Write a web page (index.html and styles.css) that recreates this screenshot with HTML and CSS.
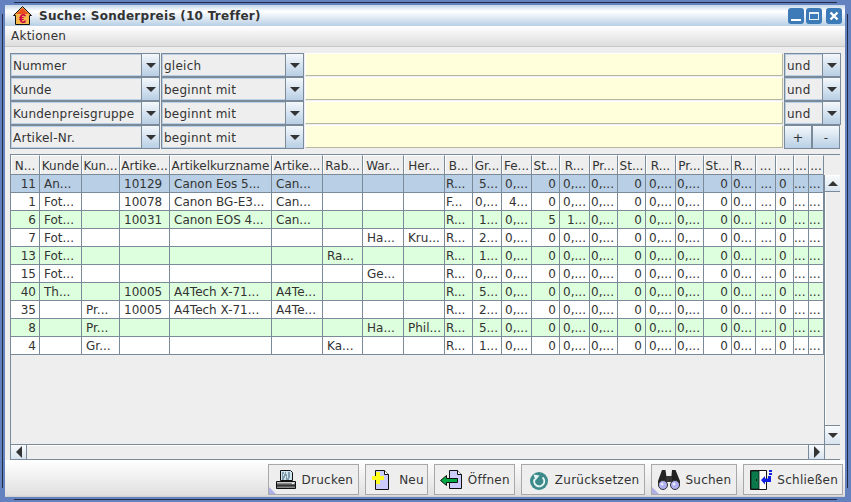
FILE: index.html
```html
<!DOCTYPE html>
<html lang="de">
<head>
<meta charset="utf-8">
<title>Suche: Sonderpreis</title>
<link rel="stylesheet" href="styles.css">
</head>
<body>
<div class="window">
  <div class="inner">
    <header class="titlebar">
      <svg class="appicon" width="20" height="20" viewBox="0 0 20 20"><path d="M9.5 .5 L18.5 9.5 L16.5 9.5 L16.5 18.5 L2.5 18.5 L2.5 9.5 L.5 9.5 Z" fill="#f2a23c" stroke="#111"/><path d="M9.5 2 L15.5 8 L3.5 8 Z" fill="#e8501e"/><rect x="3" y="8" width="13" height="10" fill="#f8b84c"/><text x="9.5" y="17" class="euro">€</text></svg>
      <span class="titletext">Suche: Sonderpreis (10 Treffer)</span>
      <span class="winbtns">
        <span class="winbtn"><svg width="16" height="16" viewBox="0 0 16 16"><rect x="3" y="11" width="10" height="2" fill="#fff"/></svg></span>
        <span class="winbtn"><svg width="16" height="16" viewBox="0 0 16 16"><path d="M3 4h10v8H3z M4 6v5h8V6z" fill="#e8f0f8" fill-rule="evenodd"/></svg></span>
        <span class="winbtn"><svg width="16" height="16" viewBox="0 0 16 16"><path d="M4.5 4.5 L11.500 11.500 M11.500 4.500 L4.500 11.500" stroke="#fff" stroke-width="2.400"/></svg></span>
      </span>
    </header>
    <nav class="menubar"><span>Aktionen</span></nav>
    <main class="content">
      <section class="filters">
        <div class="combo"><span class="val">Nummer</span><span class="arrow"><i></i></span></div>
        <div class="combo"><span class="val">gleich</span><span class="arrow"><i></i></span></div>
        <div class="field"></div>
        <div class="combo"><span class="val">und</span><span class="arrow"><i></i></span></div>
        <div class="combo"><span class="val">Kunde</span><span class="arrow"><i></i></span></div>
        <div class="combo"><span class="val">beginnt mit</span><span class="arrow"><i></i></span></div>
        <div class="field"></div>
        <div class="combo"><span class="val">und</span><span class="arrow"><i></i></span></div>
        <div class="combo"><span class="val">Kundenpreisgruppe</span><span class="arrow"><i></i></span></div>
        <div class="combo"><span class="val">beginnt mit</span><span class="arrow"><i></i></span></div>
        <div class="field"></div>
        <div class="combo"><span class="val">und</span><span class="arrow"><i></i></span></div>
        <div class="combo"><span class="val">Artikel-Nr.</span><span class="arrow"><i></i></span></div>
        <div class="combo"><span class="val">beginnt mit</span><span class="arrow"><i></i></span></div>
        <div class="field"></div>
        <div class="plusminus"><span>+</span><span>-</span></div>
      </section>
      <section class="tablebox">
        <div class="viewport">
          <table>
            <colgroup><col><col><col><col><col><col><col><col><col><col><col><col><col><col><col><col><col><col><col><col><col><col><col><col></colgroup>
            <thead><tr><th>N...</th><th>Kunde</th><th>Kun...</th><th>Artike...</th><th>Artikelkurzname</th><th>Artike...</th><th>Rab...</th><th>War...</th><th>Her...</th><th>B...</th><th>Gr...</th><th>Fe...</th><th>St...</th><th>R...</th><th>Pr...</th><th>St...</th><th>R...</th><th>Pr...</th><th>St...</th><th>R...</th><th>...</th><th>...</th><th>...</th><th>...</th></tr></thead>
            <tbody>
              <tr class="sel"><td>11</td><td>An...</td><td></td><td>10129</td><td>Canon Eos 5...</td><td>Can...</td><td></td><td></td><td></td><td>R...</td><td>5...</td><td>0,...</td><td>0</td><td>0,...</td><td>0,...</td><td>0</td><td>0,...</td><td>0,...</td><td>0</td><td>0...</td><td>...</td><td>0</td><td>...</td><td>...</td></tr>
              <tr><td>1</td><td>Fot...</td><td></td><td>10078</td><td>Canon BG-E3...</td><td>Can...</td><td></td><td></td><td></td><td>F...</td><td>0,...</td><td>4...</td><td>0</td><td>0,...</td><td>0,...</td><td>0</td><td>0,...</td><td>0,...</td><td>0</td><td>0...</td><td>...</td><td>0</td><td>...</td><td>...</td></tr>
              <tr class="alt"><td>6</td><td>Fot...</td><td></td><td>10031</td><td>Canon EOS 4...</td><td>Can...</td><td></td><td></td><td></td><td>R...</td><td>1...</td><td>0,...</td><td>5</td><td>1...</td><td>0,...</td><td>0</td><td>0,...</td><td>0,...</td><td>0</td><td>0...</td><td>...</td><td>0</td><td>...</td><td>...</td></tr>
              <tr><td>7</td><td>Fot...</td><td></td><td></td><td></td><td></td><td></td><td>Ha...</td><td>Kru...</td><td>R...</td><td>2...</td><td>0,...</td><td>0</td><td>0,...</td><td>0,...</td><td>0</td><td>0,...</td><td>0,...</td><td>0</td><td>0...</td><td>...</td><td>0</td><td>...</td><td>...</td></tr>
              <tr class="alt"><td>13</td><td>Fot...</td><td></td><td></td><td></td><td></td><td>Ra...</td><td></td><td></td><td>R...</td><td>1...</td><td>0,...</td><td>0</td><td>0,...</td><td>0,...</td><td>0</td><td>0,...</td><td>0,...</td><td>0</td><td>0...</td><td>...</td><td>0</td><td>...</td><td>...</td></tr>
              <tr><td>15</td><td>Fot...</td><td></td><td></td><td></td><td></td><td></td><td>Ge...</td><td></td><td>R...</td><td>0,...</td><td>0,...</td><td>0</td><td>0,...</td><td>0,...</td><td>0</td><td>0,...</td><td>0,...</td><td>0</td><td>0...</td><td>...</td><td>0</td><td>...</td><td>...</td></tr>
              <tr class="alt"><td>40</td><td>Th...</td><td></td><td>10005</td><td>A4Tech X-71...</td><td>A4Te...</td><td></td><td></td><td></td><td>R...</td><td>5...</td><td>0,...</td><td>0</td><td>0,...</td><td>0,...</td><td>0</td><td>0,...</td><td>0,...</td><td>0</td><td>0...</td><td>...</td><td>0</td><td>...</td><td>...</td></tr>
              <tr><td>35</td><td></td><td>Pr...</td><td>10005</td><td>A4Tech X-71...</td><td>A4Te...</td><td></td><td></td><td></td><td>R...</td><td>2...</td><td>0,...</td><td>0</td><td>0,...</td><td>0,...</td><td>0</td><td>0,...</td><td>0,...</td><td>0</td><td>0...</td><td>...</td><td>0</td><td>...</td><td>...</td></tr>
              <tr class="alt"><td>8</td><td></td><td>Pr...</td><td></td><td></td><td></td><td></td><td>Ha...</td><td>Phil...</td><td>R...</td><td>5...</td><td>0,...</td><td>0</td><td>0,...</td><td>0,...</td><td>0</td><td>0,...</td><td>0,...</td><td>0</td><td>0...</td><td>...</td><td>0</td><td>...</td><td>...</td></tr>
              <tr><td>4</td><td></td><td>Gr...</td><td></td><td></td><td></td><td>Ka...</td><td></td><td></td><td>R...</td><td>1...</td><td>0,...</td><td>0</td><td>0,...</td><td>0,...</td><td>0</td><td>0,...</td><td>0,...</td><td>0</td><td>0...</td><td>...</td><td>0</td><td>...</td><td>...</td></tr>
            </tbody>
          </table>
        </div>
        <div class="vbar">
          <div class="corner"></div>
          <div class="sbtn up"><i></i></div>
          <div class="track"></div>
          <div class="sbtn down"><i></i></div>
        </div>
        <div class="hbar">
          <div class="sbtn left"><i></i></div>
          <div class="track"></div>
          <div class="sbtn right"><i></i></div>
        </div>
        <div class="endcorner"></div>
      </section>
    </main>
    <footer class="buttons">
      <button class="btn mark medium">
        <svg width="24" height="24" viewBox="0 0 24 24"><path d="M7.500 2.500h10l2 2v8h-12z" fill="#cfe6f0" stroke="#111"/><path d="M9 5h2M12 5h1M15 5h2M9 7h1M11 7h3M15 7h2M9 9h3M13 9h1M15 9h2M9 11h2M13 11h3" stroke="#356" stroke-width="1"/><path d="M3.500 13.500h19v7h-19z" fill="#8a8a8a" stroke="#111"/><path d="M4 14h18v1H4z" fill="#ccc"/><path d="M4 17.500h18" stroke="#333" stroke-width="2"/><rect x="19" y="15" width="2" height="1" fill="#fff"/></svg>
        Drucken
      </button>
      <button class="btn narrow">
        <svg width="24" height="24" viewBox="0 0 24 24"><path d="M5.500 2.500h9l4 4v15h-13z" fill="#ccccff" stroke="#111"/><path d="M14.500 2.500v4h4" fill="#fff" stroke="#111"/><path d="M6 4h4v4h4v4h-4v4H6v-4H2V8h4z" fill="#ffff22"/></svg>
        Neu
      </button>
      <button class="btn">
        <svg width="24" height="24" viewBox="0 0 24 24"><path d="M10.500 2.500h8l4 4v14h-12z" fill="#ccccff" stroke="#111"/><path d="M18.500 2.500v4h4" fill="#fff" stroke="#111"/><path d="M1.500 12.500 L7.500 7.500 V10.500 H18.500 V14.500 H7.500 V17.500 Z" fill="#00aa44" stroke="#111"/></svg>
        Öffnen
      </button>
      <button class="btn medium">
        <svg width="24" height="24" viewBox="0 0 24 24"><circle cx="13" cy="13" r="9" fill="#3d8a8a"/><path d="M8.800 11 A5 5 0 1 0 16.500 9.500" fill="none" stroke="#e8f4f4" stroke-width="2"/><path d="M7.500 6.500 L13.500 7.500 L9.500 12.500 Z" fill="#e8f4f4"/></svg>
        Zurücksetzen
      </button>
      <button class="btn mark medium">
        <svg width="24" height="24" viewBox="0 0 24 24"><path d="M6 2h3.500l1.500 11v5H2v-5z" fill="#222"/><path d="M16 2h3.500L24 13v5h-9v-5z" fill="#222"/><rect x="10" y="8" width="6" height="6" fill="#333"/><circle cx="7" cy="17" r="4.500" fill="#b0b0f0" stroke="#333"/><circle cx="19" cy="17" r="4.500" fill="#b0b0f0" stroke="#333"/><circle cx="6" cy="16" r="1.500" fill="#e8e8ff"/><circle cx="18" cy="16" r="1.500" fill="#e8e8ff"/></svg>
        Suchen
      </button>
      <button class="btn">
        <svg width="24" height="24" viewBox="0 0 24 24"><path d="M2.500 2.500h16v19h-16z" fill="#fff" stroke="#111"/><path d="M3 3h8v18H3z" fill="#0a7a4a" stroke="#111" stroke-width=".8"/><rect x="8" y="11" width="1" height="2" fill="#111"/><path d="M13 12 L17 8 V10.500 H20 V8 H23 V14 H17 V16.500 Z" fill="#1020e0"/><path d="M21 2h3v2h-3zM21 5h3v2h-3z" fill="#1020e0"/></svg>
        Schließen
      </button>
    </footer>
  </div>
</div>
</body>
</html>
```

FILE: styles.css
```css
* { box-sizing: border-box; }
html, body { margin: 0; padding: 0; }
body {
  width: 851px;
  height: 502px;
  overflow: hidden;
  font-family: "DejaVu Sans", sans-serif;
  font-size: 12px;
  letter-spacing: .25px;
  color: #333;
}
.window {
  position: relative;
  width: 851px;
  height: 502px;
  padding: 5px 6px 5px 5px;
  background: #6382bf;
}
.window::before {
  content: "";
  position: absolute;
  left: 14px;
  right: 14px;
  top: 2px;
  bottom: 2px;
  border-top: 1px solid #222c44;
  border-bottom: 1px solid #222c44;
}
.window::after {
  content: "";
  position: absolute;
  left: 2px;
  right: 3px;
  top: 14px;
  bottom: 14px;
  border-left: 1px solid #222c44;
  border-right: 1px solid #222c44;
}
.inner {
  display: flex;
  flex-direction: column;
  height: 100%;
  background: #eee;
}
.titlebar {
  display: flex;
  align-items: center;
  height: 21px;
  flex: none;
  padding-left: 8px;
  background: linear-gradient(#c4d6ea 0, #ffffff 30%, #b8cfe5 100%);
}
.appicon { margin: 0 6px 0 0; flex: none; }
.euro { font-family: "Liberation Sans", sans-serif; font-size: 13px; font-weight: 700; fill: #cc0044; text-anchor: middle; letter-spacing: 0; }
.titletext { font-weight: 700; font-size: 12px; letter-spacing: .27px; color: #333; }
.winbtns { margin-left: auto; display: flex; padding-right: 3px; gap: 2px; }
.winbtn { width: 16px; height: 16px; background: #3d7ab8; border-radius: 3px; display: block; }
.winbtn:last-child { margin-left: 2px; }
.winbtn svg { display: block; }
.menubar {
  height: 21px;
  flex: none;
  padding: 2px 0 0 6px;
  line-height: 16px;
  background: linear-gradient(#fff, #dcdcdc);
  border-bottom: 1px solid #c8c8c8;
}
.content { flex: 1; display: flex; flex-direction: column; gap: 5px; padding: 6px 5px 0; min-height: 0; }
.filters {
  display: grid;
  grid-template-columns: 150px 143px 1fr 57px;
  grid-auto-rows: 24px;
  column-gap: 1px;
  width: 831px;
  flex: none;
}
.combo {
  display: flex;
  height: 24px;
  border: 1px solid #7a8a99;
  background: #eee;
}
.val {
  flex: 1;
  min-width: 0;
  white-space: nowrap;
  overflow: hidden;
  padding: 1px 0 0 1px;
  line-height: 20px;
  border: 1px solid #b8cfe5;
  border-right: 0;
}
.arrow {
  width: 18px;
  flex: none;
  display: flex;
  align-items: center;
  justify-content: center;
  border-left: 1px solid #7a8a99;
  background: linear-gradient(#f4f8fb, #b8cfe5);
}
.arrow i, .sbtn.up i, .sbtn.down i {
  display: block;
  width: 0;
  height: 0;
  border-left: 5px solid transparent;
  border-right: 5px solid transparent;
  border-top: 5px solid #333;
}
.field {
  height: 23px;
  background: #ffffdb;
  border: 1px solid #b8b8a0;
  border-top-color: #fff;
  border-left-color: #fff;
  box-shadow: inset 1px 1px 0 #ffffdb;
  outline: 0;
}
.plusminus {
  display: flex;
  height: 24px;
  margin-right: 1px;
  border: 1px solid #7a8a99;
  background: linear-gradient(#f4f8fb, #b8cfe5);
}
.plusminus span {
  flex: 1;
  text-align: center;
  line-height: 24px;
  font-size: 13px;
}
.plusminus span + span { border-left: 2px solid #7a8a99; font-size: 12px; }
.tablebox {
  flex: none;
  height: 306px;
  width: 830px;
  border: 1px solid #7a8a99;
  display: grid;
  grid-template-columns: 813px 16px;
  grid-template-rows: 1fr 15px;
}
.viewport { overflow: hidden; min-height: 0; }
table {
  border-collapse: separate;
  border-spacing: 0;
  table-layout: fixed;
  width: 813px;
  font-size: 12px;
  letter-spacing: 0;
}
col:nth-child(1) { width: 29px; }
col:nth-child(2) { width: 42px; }
col:nth-child(3) { width: 38px; }
col:nth-child(4) { width: 50px; }
col:nth-child(5) { width: 102px; }
col:nth-child(6) { width: 51px; }
col:nth-child(7) { width: 40px; }
col:nth-child(8) { width: 41px; }
col:nth-child(9) { width: 41px; }
col:nth-child(10) { width: 28px; }
col:nth-child(11) { width: 29px; }
col:nth-child(12) { width: 30px; }
col:nth-child(13) { width: 28px; }
col:nth-child(14) { width: 30px; }
col:nth-child(15) { width: 28px; }
col:nth-child(16) { width: 28px; }
col:nth-child(17) { width: 30px; }
col:nth-child(18) { width: 28px; }
col:nth-child(19) { width: 28px; }
col:nth-child(20) { width: 24px; }
col:nth-child(21) { width: 20px; }
col:nth-child(22) { width: 18px; }
col:nth-child(23) { width: 15px; }
col:nth-child(24) { width: 15px; }
th, td {
  padding: 1px 0 0;
  overflow: hidden;
  white-space: nowrap;
  border-right: 1px solid #7a8a99;
  border-bottom: 1px solid #7a8a99;
  text-align: center;
  font-weight: 400;
}
th {
  height: 20px;
  background: #eee;
  border-top: 1px solid #fff;
  box-shadow: inset 1px 0 0 #fff;
}
td { height: 18px; background: #fff; line-height: 16px; }
tr.sel td { background: #b8cfe5; }
tr.alt td { background: #ddffdd; }
td:nth-child(1), td:nth-child(n+11):nth-child(-n+21) { text-align: right; padding-right: 3px; }
td:nth-child(n+2):nth-child(-n+9) { text-align: left; padding-left: 4px; }
td:nth-child(10) { text-align: left; padding-left: 1px; }
td:nth-child(22) { text-align: left; padding-left: 3px; }
td:nth-child(n+23) { text-align: left; padding-left: 0; }
.vbar { display: flex; flex-direction: column; min-height: 0; border-left: 1px solid #7a8a99; }
.corner { height: 20px; flex: none; margin-left: -1px; background: #eee; }
.track { flex: 1; background: #eee; }
.vbar .track { box-shadow: inset 1px 0 0 #fff; }
.sbtn {
  flex: none;
  display: flex;
  align-items: center;
  justify-content: center;
  background: linear-gradient(#f8fafc, #d8e4ef);
}
.sbtn.up { height: 17px; border-top: 1px solid #fff; border-bottom: 1px solid #7a8a99; }
.sbtn.down { height: 19px; border-top: 1px solid #7a8a99; }
.sbtn.up i { border-top: 0; border-bottom: 5px solid #333; }
.hbar { display: flex; border-top: 1px solid #7a8a99; }
.hbar .track { box-shadow: inset 0 1px 0 #fff; }
.sbtn.left { width: 16px; border-right: 1px solid #7a8a99; }
.sbtn.right { width: 16px; border-left: 1px solid #7a8a99; }
.sbtn.left i, .sbtn.right i { display: block; width: 0; height: 0; border-top: 6px solid transparent; border-bottom: 6px solid transparent; }
.sbtn.left i { border-right: 6px solid #333; }
.sbtn.right i { border-left: 6px solid #333; }
.endcorner { background: #eee; border-top: 1px solid #7a8a99; border-left: 1px solid #7a8a99; }
.buttons {
  flex: none;
  height: 37px;
  display: flex;
  justify-content: flex-end;
  gap: 6px;
  padding: 4px 2px 2px 0;
  background: linear-gradient(#fff 0, #e0e0e0 95%, #ccc 100%);
}
.btn {
  position: relative;
  display: flex;
  align-items: center;
  gap: 5px;
  height: 31px;
  padding: 0 4px 0 4px;
  background: #eee;
  border: 1px solid #a8a8a8;
  font: 12px "DejaVu Sans", sans-serif;
  letter-spacing: .25px;
  color: #333;
}
.btn.narrow { padding-right: 3px; }
.btn.medium { padding-right: 5px; }
.btn svg { flex: none; }
.mark::after {
  content: "";
  position: absolute;
  left: 0;
  bottom: 0;
  border-left: 7px solid #b0b0e8;
  border-top: 7px solid transparent;
}
```
